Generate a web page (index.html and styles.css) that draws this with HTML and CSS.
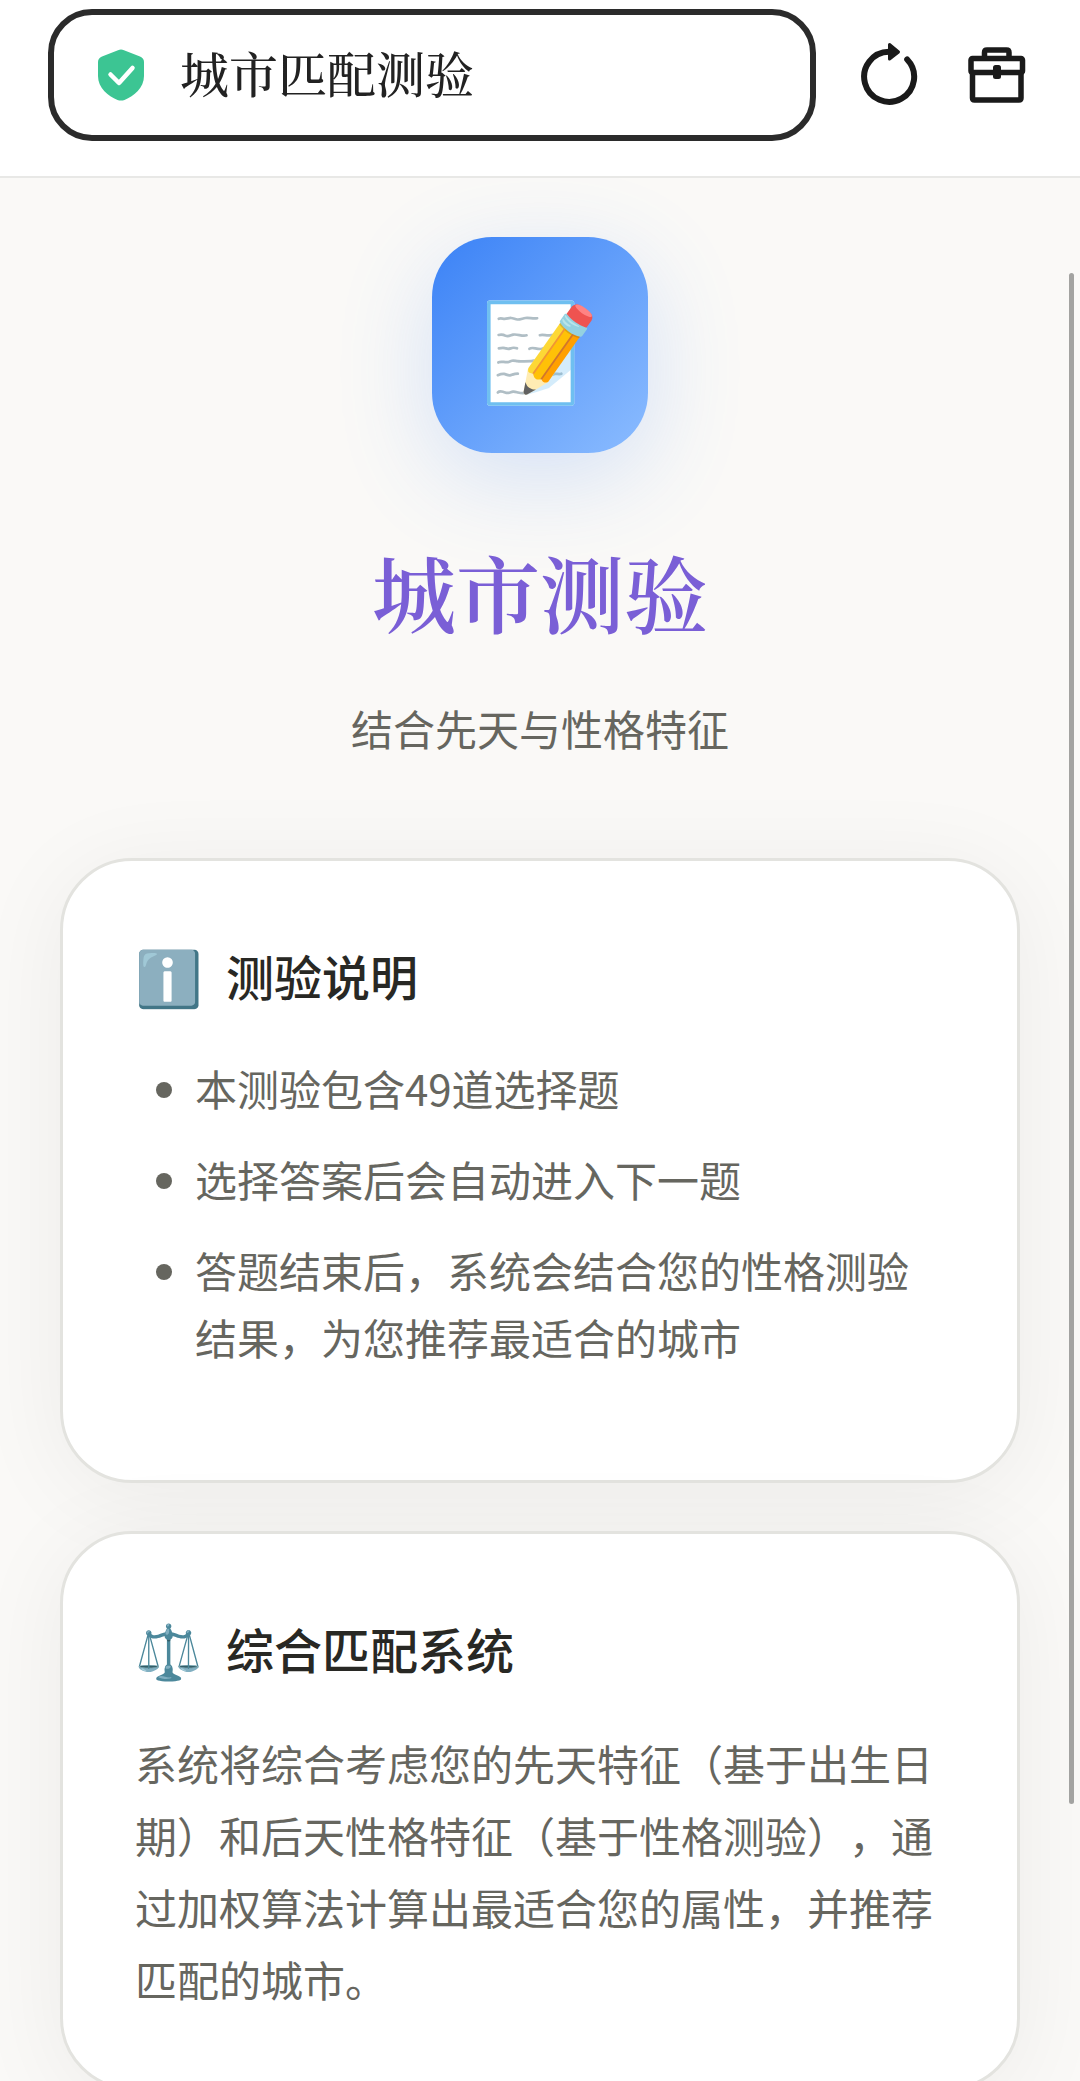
FILE: index.html
```html
<!DOCTYPE html>
<html lang="zh-CN">
<head>
  <meta charset="utf-8">
  <meta name="viewport" content="width=device-width, initial-scale=1">
  <title>城市匹配测验</title>
  <link rel="stylesheet" href="styles.css">
</head>
<body>
  <header class="toolbar">
    <label class="address">
      <svg class="shield" viewBox="0 0 46 52" aria-hidden="true">
        <path d="M20 1.200Q23 0 26 1.200L42 7.500Q46 9.200 46 13V27C46 39 36 47 26.500 51Q23 52.200 19.500 51C10 47 0 39 0 27V13Q0 9.200 4 7.500Z" fill="#3cc593"/>
        <path d="M12.500 25.500L21 34L34.500 19" fill="none" stroke="#fff" stroke-width="4.500" stroke-linecap="round" stroke-linejoin="round"/>
      </svg>
      <input class="address-text" type="text" value="城市匹配测验" aria-label="地址栏" readonly>
    </label>
    <div class="tools">
      <button class="tool" type="button" aria-label="刷新">
        <svg viewBox="0 0 60 66" aria-hidden="true">
          <path d="M49.200 19.500A25 25 0 1 1 31 11.800" fill="none" stroke="#1a1a1a" stroke-width="6" stroke-linecap="round"/>
          <path d="M31.500 4.500L40.500 12L31.500 19Z" fill="#1a1a1a" stroke="#1a1a1a" stroke-width="3" stroke-linejoin="round"/>
        </svg>
      </button>
      <button class="tool" type="button" aria-label="工具箱">
        <svg viewBox="0 0 60 66" aria-hidden="true">
          <g fill="none" stroke="#1a1a1a" stroke-width="5.500" stroke-linejoin="round">
            <path d="M18.500 17V12.500Q18.500 10 21 10H40.500Q43 10 43 12.500V17"/>
            <rect x="5" y="18.500" width="51.500" height="14" rx="1.500"/>
            <path d="M6.500 33V58Q6.500 60 8.500 60H53Q55 60 55 58V33"/>
          </g>
          <rect x="27" y="25" width="8" height="14" rx="2.500" fill="#1a1a1a"/>
        </svg>
      </button>
    </div>
  </header>

  <main class="page">
    <section class="hero">
      <div class="hero-icon" aria-hidden="true">📝</div>
      <h1 class="hero-title">城市测验</h1>
      <p class="hero-subtitle">结合先天与性格特征</p>
    </section>

    <section class="card">
      <h2 class="card-title"><span class="card-emoji" aria-hidden="true">ℹ️</span>测验说明</h2>
      <ul class="rules">
        <li>本测验包含49道选择题</li>
        <li>选择答案后会自动进入下一题</li>
        <li>答题结束后，系统会结合您的性格测验结果，为您推荐最适合的城市</li>
      </ul>
    </section>

    <section class="card">
      <h2 class="card-title"><span class="card-emoji" aria-hidden="true">⚖️</span>综合匹配系统</h2>
      <p class="card-text">系统将综合考虑您的先天特征（基于出生日期）和后天性格特征（基于性格测验），通过加权算法计算出最适合您的属性，并推荐匹配的城市。</p>
    </section>
  </main>
  <div class="scroll-thumb" aria-hidden="true"></div>
</body>
</html>
```
FILE: styles.css
```css
* {
  box-sizing: border-box;
  margin: 0;
  padding: 0;
}

body {
  position: relative;
  display: flex;
  flex-direction: column;
  height: 100vh;
  overflow: hidden;
  background: #faf9f7;
  color: #66665f;
  font-family: "Noto Sans CJK SC", sans-serif;
  font-size: 42px;
  text-spacing-trim: space-all;
}

/* Browser toolbar */
.toolbar {
  display: flex;
  flex: none;
  align-items: flex-start;
  gap: 42px;
  padding: 9px 54px 35px 48px;
  background: #fff;
  border-bottom: 2px solid #e8e8e6;
}

.address {
  display: flex;
  flex: 1;
  align-items: center;
  gap: 36px;
  height: 132px;
  min-width: 0;
  padding: 0 44px;
  border: 6px solid #2b2b2b;
  border-radius: 44px;
  background: #fff;
}

.shield {
  flex: none;
  width: 46px;
  height: 52px;
}

.address-text {
  flex: 1;
  min-width: 0;
  padding-bottom: 6px;
  border: 0;
  outline: 0;
  background: none;
  color: #222;
  font-family: KaiTi, "Kaiti SC", "Noto Serif CJK SC", serif;
  font-size: 49px;
  font-weight: 500;
  line-height: 72px;
}

.tools {
  display: flex;
  gap: 48px;
}

.tool {
  width: 60px;
  height: 128px;
  border: 0;
  background: none;
}

.tool svg {
  display: block;
  width: 60px;
  height: 66px;
}

/* Scrolling page */
.page {
  flex: 1;
  min-height: 0;
  padding: 59px 60px;
  overflow: auto;
  scrollbar-width: none;
}

.hero {
  display: flex;
  flex-direction: column;
  align-items: center;
  padding-bottom: 96px;
}

.hero-icon {
  display: flex;
  align-items: center;
  justify-content: center;
  width: 216px;
  height: 216px;
  border-radius: 60px;
  background: linear-gradient(135deg, #3b82f6, #8bbcff);
  box-shadow: 0 24px 96px rgba(59, 130, 246, 0.2);
  font-size: 96px;
  line-height: 1;
}

.hero-title {
  margin-top: 66px;
  color: #7a5fd6;
  font-family: "Noto Serif CJK SC", serif;
  font-size: 84px;
  font-weight: 600;
  line-height: 144px;
}

.hero-subtitle {
  margin-top: 31px;
  line-height: 68px;
}

.card {
  margin-bottom: 48px;
  padding: 72px;
  border: 3px solid #e3e3df;
  border-radius: 72px;
  background: #fff;
  box-shadow: 0 12px 96px rgba(0, 0, 0, 0.06);
}

.card-title {
  display: flex;
  align-items: center;
  gap: 24px;
  height: 84px;
  margin-bottom: 37px;
  color: #282824;
  font-size: 48px;
  font-weight: 500;
}

.card-emoji {
  font-size: 54px;
  font-weight: 400;
  line-height: 1;
}

.rules {
  padding: 0 0 14px 60px;
  line-height: 67px;
}

.rules li {
  margin-bottom: 24px;
}

.card-text {
  line-height: 72px;
}

/* Overlay scrollbar */
.scroll-thumb {
  position: absolute;
  top: 273px;
  right: 6px;
  width: 5px;
  height: 1531px;
  border-radius: 3px;
  background: #a3a3a1;
}
```
